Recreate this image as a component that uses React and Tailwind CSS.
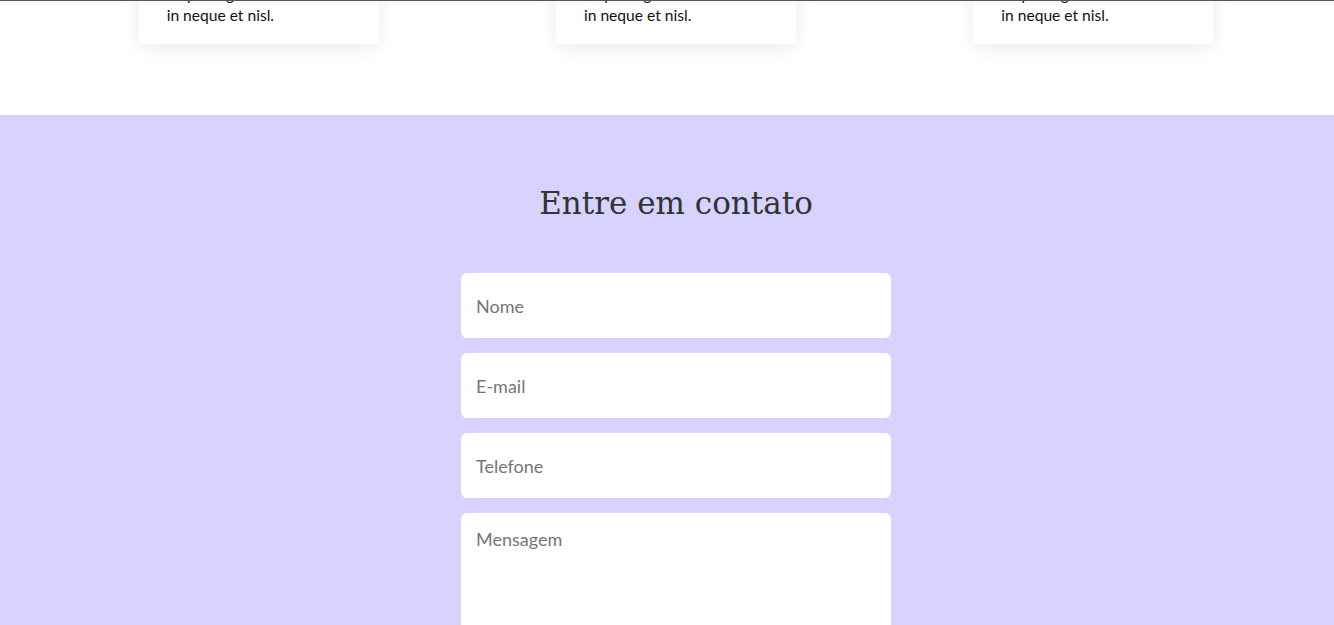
import React from "react";

const cards = [1, 2, 3];

export default function App() {
  return (
    <div className="min-h-screen bg-white" style={{ fontFamily: "Lato, 'Open Sans', sans-serif" }}>
      {/* Services strip (scrolled, only card bottoms visible) */}
      <section className="h-[115px] overflow-hidden border-t border-[#555555] bg-white pl-[18px]">
        <div className="mx-auto -mt-[79px] grid w-[1252px] grid-cols-3">
          {cards.map((c) => (
            <div key={c} className="flex justify-center">
              <div className="w-[240px] bg-white px-[28px] pb-[18px] pt-[20px] shadow-[0_4px_18px_rgba(0,0,0,0.08)]">
                <p className="text-[15.6px] leading-[21px] text-[#111]">
                  Lorem ipsum dolor sit amet, consectetur adipiscing elit. Vestibulum in neque et nisl.
                </p>
              </div>
            </div>
          ))}
        </div>
      </section>

      {/* Contact */}
      <section className="bg-[#d7d3fe] pb-20 pl-[18px] pt-[68px]">
        <h2
          className="text-center text-[31px] leading-[40px] text-[#333333]"
          style={{ fontFamily: "'DejaVu Serif', 'Liberation Serif', serif" }}
        >
          Entre em contato
        </h2>
        <form className="mx-auto mt-[50px] flex w-[430px] flex-col gap-[15px]">
          <input
            type="text"
            placeholder="Nome"
            className="h-[65px] rounded-md bg-white px-[15px] text-[18px] text-[#333] outline-none placeholder:text-[#757575]"
          />
          <input
            type="email"
            placeholder="E-mail"
            className="h-[65px] rounded-md bg-white px-[15px] text-[18px] text-[#333] outline-none placeholder:text-[#757575]"
          />
          <input
            type="tel"
            placeholder="Telefone"
            className="h-[65px] rounded-md bg-white px-[15px] text-[18px] text-[#333] outline-none placeholder:text-[#757575]"
          />
          <textarea
            placeholder="Mensagem"
            className="h-[160px] resize-none rounded-md bg-white px-[15px] pb-[15px] pt-[13px] text-[18px] text-[#333] outline-none placeholder:text-[#757575]"
          />
        </form>
      </section>
    </div>
  );
}
